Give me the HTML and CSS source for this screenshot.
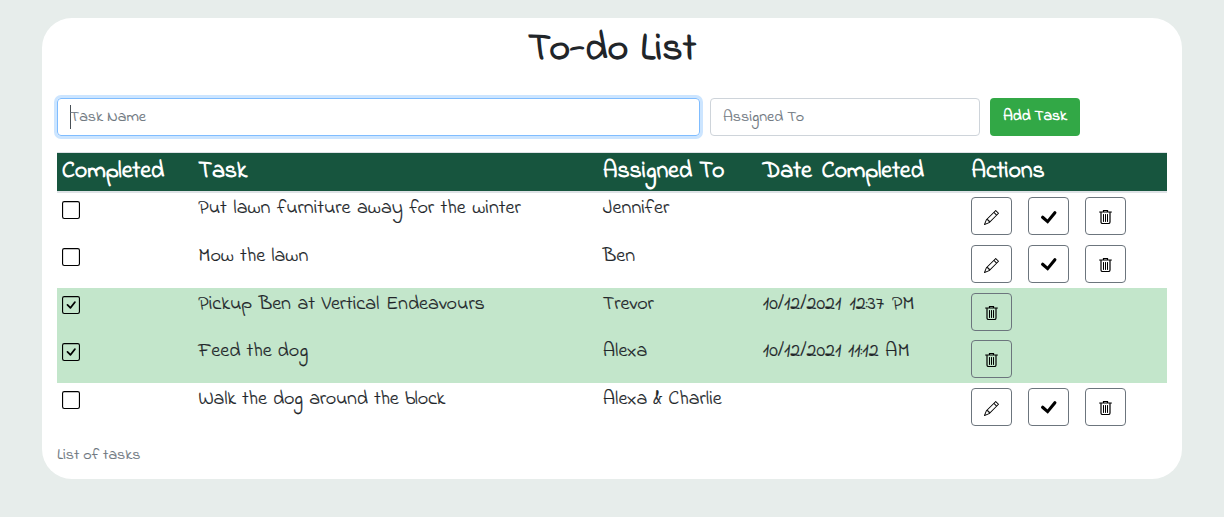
FILE: index.html
```html
<!DOCTYPE html>
<html lang="en">
<head>
<meta charset="utf-8">
<title>To-do List</title>
<link rel="stylesheet" href="styles.css">
</head>
<body>
<svg class="defs" aria-hidden="true">
  <symbol id="square" viewBox="0 0 16 16"><path d="M14 1a1 1 0 0 1 1 1v12a1 1 0 0 1-1 1H2a1 1 0 0 1-1-1V2a1 1 0 0 1 1-1h12zM2 0a2 2 0 0 0-2 2v12a2 2 0 0 0 2 2h12a2 2 0 0 0 2-2V2a2 2 0 0 0-2-2H2z"/></symbol>
  <symbol id="check-square" viewBox="0 0 16 16"><path d="M14 1a1 1 0 0 1 1 1v12a1 1 0 0 1-1 1H2a1 1 0 0 1-1-1V2a1 1 0 0 1 1-1h12zM2 0a2 2 0 0 0-2 2v12a2 2 0 0 0 2 2h12a2 2 0 0 0 2-2V2a2 2 0 0 0-2-2H2z"/><path d="M10.97 4.97a.75.75 0 0 1 1.071 1.05l-3.992 4.99a.75.75 0 0 1-1.08.02L4.324 8.384a.75.75 0 1 1 1.06-1.06l2.094 2.093 3.473-4.425a.235.235 0 0 1 .02-.022z"/></symbol>
  <symbol id="pencil" viewBox="0 0 16 16"><path d="M12.146.146a.5.5 0 0 1 .708 0l3 3a.5.5 0 0 1 0 .708l-10 10a.5.5 0 0 1-.168.11l-5 2a.5.5 0 0 1-.65-.65l2-5a.5.5 0 0 1 .11-.168l10-10zM11.207 2.5 13.5 4.793 14.793 3.5 12.5 1.207 11.207 2.5zm1.586 3L10.5 3.207 4 9.707V10h.5a.5.5 0 0 1 .5.5v.5h.5a.5.5 0 0 1 .5.5v.5h.293l6.5-6.5zm-9.761 5.175-.106.106-1.528 3.821 3.821-1.528.106-.106A.5.5 0 0 1 5 12.5V12h-.5a.5.5 0 0 1-.5-.5V11h-.5a.5.5 0 0 1-.468-.325z"/></symbol>
  <symbol id="check" viewBox="0 0 16 16"><path d="M2.900 8.200 6.900 11.700 12.700 4.600" fill="none" stroke="#000" stroke-width="2.500" stroke-linecap="round"/></symbol>
  <symbol id="trash" viewBox="0 0 13 14"><path d="M4.500 1.500v-1h4v1M.600 2h11.800M2 2.500v9.500q0 1.500 1.500 1.500h6q1.500 0 1.500-1.500V2.500" fill="none" stroke="#000" stroke-width="1.200" stroke-linecap="round"/><path d="M4.500 4.500v7M6.500 4.500v7M8.500 4.500v7" fill="none" stroke="#000" stroke-linecap="round"/></symbol>
</svg>
<main class="card">
  <h1 class="title">To-do List</h1>
  <form class="form">
    <div class="field task-field focused"><i class="caret"></i><span>Task Name</span></div>
    <div class="field person-field"><span>Assigned To</span></div>
    <button class="add" type="button">Add Task</button>
  </form>
  <section class="table">
    <div class="row head"><div>Completed</div><div>Task</div><div>Assigned To</div><div class="h-date">Date Completed</div><div>Actions</div></div>
    <div class="row"><div><svg class="box"><use href="#square"/></svg></div><div>Put lawn furniture away for the winter</div><div>Jennifer</div><div></div><div class="actions"><button class="btn"><svg><use href="#pencil"/></svg></button><button class="btn"><svg class="wide"><use href="#check"/></svg></button><button class="btn"><svg class="bin"><use href="#trash"/></svg></button></div></div>
    <div class="row"><div><svg class="box"><use href="#square"/></svg></div><div class="snug">Mow the lawn</div><div>Ben</div><div></div><div class="actions"><button class="btn"><svg><use href="#pencil"/></svg></button><button class="btn"><svg class="wide"><use href="#check"/></svg></button><button class="btn"><svg class="bin"><use href="#trash"/></svg></button></div></div>
    <div class="row done"><div><svg class="box"><use href="#check-square"/></svg></div><div>Pickup Ben at Vertical Endeavours</div><div>Trevor</div><div class="date">10/12/2021 12:37 PM</div><div class="actions"><button class="btn"><svg class="bin"><use href="#trash"/></svg></button></div></div>
    <div class="row done"><div><svg class="box"><use href="#check-square"/></svg></div><div class="snug">Feed the dog</div><div>Alexa</div><div>10/12/2021 11:12 AM</div><div class="actions"><button class="btn"><svg class="bin"><use href="#trash"/></svg></button></div></div>
    <div class="row"><div><svg class="box"><use href="#square"/></svg></div><div class="tight">Walk the dog around the block</div><div class="snug">Alexa &amp; Charlie</div><div></div><div class="actions"><button class="btn"><svg><use href="#pencil"/></svg></button><button class="btn"><svg class="wide"><use href="#check"/></svg></button><button class="btn"><svg class="bin"><use href="#trash"/></svg></button></div></div>
  </section>
  <p class="caption">List of tasks</p>
</main>
</body>
</html>
```
FILE: styles.css
```css
* { box-sizing: border-box; }
body { margin: 0; min-height: 517px; padding-top: 18px; background: #e7edeb; color: #212529; font: 400 16px/24px "Indie Flower", cursive; -webkit-text-stroke: .2px currentColor; }
.defs { position: absolute; width: 0; height: 0; }
.card { width: 1140px; height: 461px; margin: 0 auto; padding: 8px 15px 0; background: #fff; border-radius: 30px; }
.title { margin: 0; height: 48px; font-size: 40px; line-height: 48px; font-weight: 700; text-align: center; word-spacing: 2px; -webkit-text-stroke: 0; }
.form { display: flex; gap: 10px; margin: 24px 0 16px; height: 38px; }
.field { display: flex; align-items: center; padding: 0 12px; border: 1px solid #ced4da; border-radius: 4px; color: #6c757d; white-space: nowrap; }
.task-field { width: 643px; }
.focused { border-color: #80bdff; box-shadow: 0 0 0 3px #cce5ff; }
.caret { width: 1px; height: 24px; margin-right: -1px; background: #495057; }
.person-field { width: 270px; }
.add { width: 90px; padding: 0 0 2px; border: 0; border-radius: 4px; background: #32a846; color: #fff; font: 700 16px/24px "Indie Flower", cursive; letter-spacing: -.1px; white-space: nowrap; -webkit-text-stroke: 0; }
.table { border-top: 1px solid #dee2e6; }
.row { display: grid; grid-template-columns: 136.500px 404.500px 160px 208.500px 1fr; height: 47.530px; font-size: 20px; line-height: 32px; white-space: nowrap; word-spacing: 1.500px; }
.row > div { padding: .480px 4.800px 0; }
.row > .date { word-spacing: 3px; }
.row > .snug { word-spacing: 1px; }
.row > .tight { word-spacing: 1.500px; letter-spacing: -.220px; }
.head { height: 40px; border-bottom: 2px solid #dee2e6; background: #17553e; background-clip: padding-box; color: #fff; font-size: 24px; line-height: 37px; font-weight: 700; letter-spacing: -.150px; word-spacing: 1.500px; -webkit-text-stroke: 0; }
.head > .h-date { word-spacing: 4px; }
.done { background: #c3e6cb; }
.box { display: block; width: 18px; height: 18px; margin-top: 7.420px; }
.row > .actions { display: flex; gap: 16px; padding-top: 4.480px; }
.btn { display: flex; align-items: center; justify-content: center; width: 41px; height: 38px; padding: 3px 0 0; border: 1px solid #6c757d; border-radius: 4px; background: transparent; }
.btn svg { width: 15px; height: 15px; }
.btn .bin { width: 13px; height: 14px; margin-top: -1px; }
.btn .wide { width: 20px; height: 20px; margin-top: -2px; }
.caption { margin: 12px 0 0; color: #6c757d; }
```
